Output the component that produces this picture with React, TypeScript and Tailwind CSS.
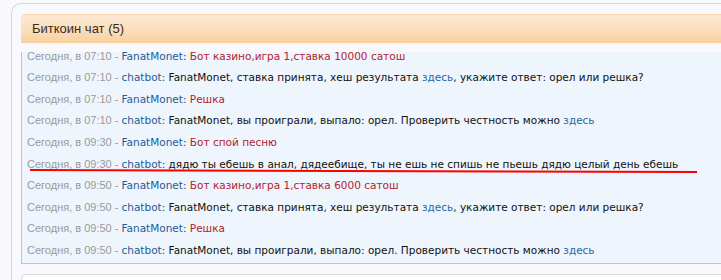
// Bitcoin chat widget snapshot

type Part = { t: string; c?: "link" | "red" | "text" };
type Row = { time: string; user: "FanatMonet" | "chatbot"; parts: Part[] };

const BET = "FanatMonet, ставка принята, хеш результата ";

const ROWS: Row[] = [
  { time: "07:10", user: "FanatMonet", parts: [{ t: "Бот казино,игра 1,ставка 10000 сатош", c: "red" }] },
  {
    time: "07:10",
    user: "chatbot",
    parts: [{ t: BET }, { t: "здесь", c: "link" }, { t: ", укажите ответ: орел или решка?" }],
  },
  { time: "07:10", user: "FanatMonet", parts: [{ t: "Решка", c: "red" }] },
  {
    time: "07:10",
    user: "chatbot",
    parts: [{ t: "FanatMonet, вы проиграли, выпало: орел. Проверить честность можно " }, { t: "здесь", c: "link" }],
  },
  { time: "09:30", user: "FanatMonet", parts: [{ t: "Бот спой песню", c: "red" }] },
  {
    time: "09:30",
    user: "chatbot",
    parts: [{ t: "дядю ты ебешь в анал, дядеебище, ты не ешь не спишь не пьешь дядю целый день ебешь" }],
  },
  { time: "09:50", user: "FanatMonet", parts: [{ t: "Бот казино,игра 1,ставка 6000 сатош", c: "red" }] },
  {
    time: "09:50",
    user: "chatbot",
    parts: [{ t: BET }, { t: "здесь", c: "link" }, { t: ", укажите ответ: орел или решка?" }],
  },
  { time: "09:50", user: "FanatMonet", parts: [{ t: "Решка", c: "red" }] },
  {
    time: "09:50",
    user: "chatbot",
    parts: [{ t: "FanatMonet, вы проиграли, выпало: орел. Проверить честность можно " }, { t: "здесь", c: "link" }],
  },
];

function partClass(c?: Part["c"]) {
  if (c === "link") return "text-[#2a67a3]";
  if (c === "red") return "text-[#b3232d]";
  return "text-[#111111]";
}

function ChatRow({ row }: { row: Row }) {
  return (
    <div className="h-[21.6px] leading-[21.6px] pl-[5px] whitespace-pre">
      <span className="text-[11px] text-[#9a9a9a] font-['Liberation_Sans',Arial,sans-serif]">
        Сегодня, в {row.time} -{" "}
      </span>
      <span className="text-[10.5px] font-['DejaVu_Sans',Verdana,sans-serif]">
        <span className="text-[#1f5c96]">{row.user}</span>
        <span className="text-[#1f3f66]">: </span>
        {row.parts.map((p, i) => (
          <span key={i} className={partClass(p.c)}>
            {p.t}
          </span>
        ))}
      </span>
    </div>
  );
}

export default function App() {
  return (
    <div
      className="relative w-[721px] h-[280px] overflow-hidden bg-[#f9f9fd]"
      style={{ fontFamily: '"Liberation Sans", Arial, sans-serif' }}
    >
      <div className="ml-[11px] mt-[3px] w-[800px] h-[300px] border-t border-l border-[#c3dbef] rounded-tl-[10px] pl-[9px] pt-[10px]">
        {/* header */}
        <div className="h-[29px] rounded-tl-[5px] border-t border-[#f6d6b0] bg-gradient-to-b from-[#fde8d0] via-[#fbdfbd] to-[#f8d09e] pl-[11px] flex items-center text-[13px] text-[#3b2a1c]">
          Биткоин чат (5)
        </div>

        {/* messages */}
        <div className="mt-[9px] h-[212px] border-l border-b border-[#a9c9e4] bg-[#eef5fd] overflow-hidden">
          <div className="-mt-[8.4px]">
            {ROWS.map((r, i) => (
              <ChatRow key={i} row={r} />
            ))}
          </div>
        </div>

        {/* input box */}
        <div className="mt-[10px] h-[40px] border-t border-l border-[#d8d8d8] rounded-tl-[5px] bg-white" />
      </div>

      {/* hand-drawn underline */}
      <svg className="absolute left-0 top-0 pointer-events-none" width="721" height="280">
        <path d="M30 170 Q 360 170.5 697 172" stroke="#ff0000" strokeWidth="2" fill="none" />
      </svg>
    </div>
  );
}
